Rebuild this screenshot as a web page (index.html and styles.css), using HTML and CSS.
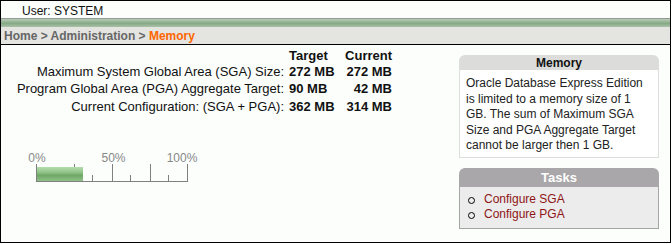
FILE: index.html
```html
<!DOCTYPE html>
<html lang="en">
<head>
    <meta charset="UTF-8">
    <title>Memory</title>
    <link rel="stylesheet" href="styles.css">
</head>
<body>

<div class="pagina">
    <!-- Usuario conectado -->
    <div class="usuario">User: SYSTEM</div>
    <div class="franja"></div>

    <!-- Migas de pan -->
    <div class="migas">Home &gt; Administration &gt; <span class="actual">Memory</span></div>

    <div class="contenido">
        <div class="principal">
            <div class="tabla">
                <div class="celda"></div>
                <div class="celda titulo">Target</div>
                <div class="celda titulo derecha">Current</div>

                <div class="celda etiqueta">Maximum System Global Area (SGA) Size:</div>
                <div class="celda valor">272 MB</div>
                <div class="celda valor derecha">272 MB</div>

                <div class="celda etiqueta">Program Global Area (PGA) Aggregate Target:</div>
                <div class="celda valor">90 MB</div>
                <div class="celda valor derecha">42 MB</div>

                <div class="celda etiqueta">Current Configuration: (SGA + PGA):</div>
                <div class="celda valor">362 MB</div>
                <div class="celda valor derecha">314 MB</div>
            </div>

            <!-- Medidor de uso -->
            <svg class="medidor" width="200" height="36" viewBox="0 0 200 36">
                <defs>
                    <linearGradient id="verde" x1="0" y1="0" x2="0" y2="1">
                        <stop offset="0" stop-color="#b4dcad"/>
                        <stop offset="0.35" stop-color="#94c68c"/>
                        <stop offset="0.6" stop-color="#6fa866"/>
                        <stop offset="1" stop-color="#8fc087"/>
                    </linearGradient>
                </defs>
                <text x="16" y="13" text-anchor="middle">0%</text>
                <text x="92.5" y="13" text-anchor="middle">50%</text>
                <text x="161" y="13" text-anchor="middle">100%</text>
                <g stroke="#808080" stroke-width="1">
                    <line x1="15.5" y1="15" x2="15.5" y2="32"/>
                    <line x1="53.5" y1="15" x2="53.5" y2="32"/>
                    <line x1="91.5" y1="15" x2="91.5" y2="32"/>
                    <line x1="129.5" y1="15" x2="129.5" y2="32"/>
                    <line x1="166.5" y1="15" x2="166.5" y2="32"/>
                    <line x1="71.5" y1="26" x2="71.5" y2="32"/>
                    <line x1="109.5" y1="26" x2="109.5" y2="32"/>
                    <line x1="147.5" y1="26" x2="147.5" y2="32"/>
                    <line x1="15" y1="32.5" x2="167" y2="32.5"/>
                </g>
                <rect x="16" y="18" width="46" height="14" fill="url(#verde)"/>
            </svg>
        </div>

        <div class="lateral">
            <div class="caja">
                <div class="caja-titulo">Memory</div>
                <div class="caja-cuerpo">Oracle Database Express Edition is limited to a memory size of 1 GB. The sum of Maximum SGA Size and PGA Aggregate Target cannot be larger then 1 GB.</div>
            </div>

            <div class="caja tareas">
                <div class="caja-titulo">Tasks</div>
                <ul class="caja-cuerpo">
                    <li><a href="#">Configure SGA</a></li>
                    <li><a href="#">Configure PGA</a></li>
                </ul>
            </div>
        </div>
    </div>
</div>

</body>
</html>
```

FILE: styles.css
```css
body {
    margin: 0;
    padding: 0;
    font-family: "Liberation Sans", Arial, sans-serif;
    color: #111;
    background: #ffffff;
}

/* Marco de la pagina */
.pagina {
    width: 669px;
    height: 241px;
    border: 1px solid #000;
    background: #fbfefb;
    overflow: hidden;
}

/* Barra del usuario */
.usuario {
    height: 14px;
    padding: 3px 0 0 21px;
    font-size: 12px;
    line-height: 14px;
    border-bottom: 1px solid #999;
}

.franja {
    height: 8px;
    background: linear-gradient(#b7ccb6, #86a985 55%, #a9c2a8);
}

/* Migas de pan */
.migas {
    height: 17px;
    padding-left: 3px;
    background: #e4e4e1;
    border-bottom: 1px solid #000;
    font-size: 12px;
    font-weight: bold;
    line-height: 18px;
    color: #666;
}

.migas .actual {
    color: #ff6600;
}

/* Contenido */
.contenido {
    display: flex;
}

.principal {
    flex: 1;
}

.tabla {
    display: grid;
    grid-template-columns: 288px 56px 47px;
    grid-template-rows: 15px 17px 17.5px 17.5px;
    margin-top: 3px;
    font-size: 13px;
    align-items: center;
}

.celda {
    white-space: nowrap;
}

.etiqueta {
    text-align: right;
    padding-right: 5px;
}

.titulo,
.valor {
    font-weight: bold;
}

.derecha {
    text-align: right;
}

.medidor {
    display: block;
    margin: 34px 0 0 20px;
}

.medidor text {
    font-family: "Liberation Sans", Arial, sans-serif;
    font-size: 12px;
    fill: #888;
}

/* Columna lateral */
.lateral {
    width: 200px;
    margin: 10px 11px 0 0;
}

.caja-titulo {
    height: 15px;
    background: #dcdcda;
    border-radius: 6px 6px 0 0;
    font-size: 12px;
    font-weight: bold;
    line-height: 16px;
    text-align: center;
}

.caja-cuerpo {
    margin: 0;
    padding: 6px 6px 3px 6px;
    border: 1px solid #dedede;
    border-top: none;
    background: #fefffe;
    font-size: 12px;
    line-height: 15.5px;
    color: #222;
}

.tareas {
    margin-top: 10px;
}

.tareas .caja-titulo {
    height: 19px;
    background: #a9a7a9;
    color: #fff;
    font-size: 13px;
    line-height: 20px;
}

.tareas .caja-cuerpo {
    height: 30px;
    padding: 5px 0 6px 0;
    list-style: none;
    background: #ececec;
    border-color: #a5a5a5;
    line-height: 15px;
}

.tareas li {
    position: relative;
    padding-left: 24px;
}

.tareas li::before {
    content: "";
    position: absolute;
    left: 8px;
    top: 5px;
    width: 5px;
    height: 5px;
    border: 1px solid #000;
    border-radius: 50%;
}

.tareas a {
    color: #8f1616;
    text-decoration: none;
}
```
